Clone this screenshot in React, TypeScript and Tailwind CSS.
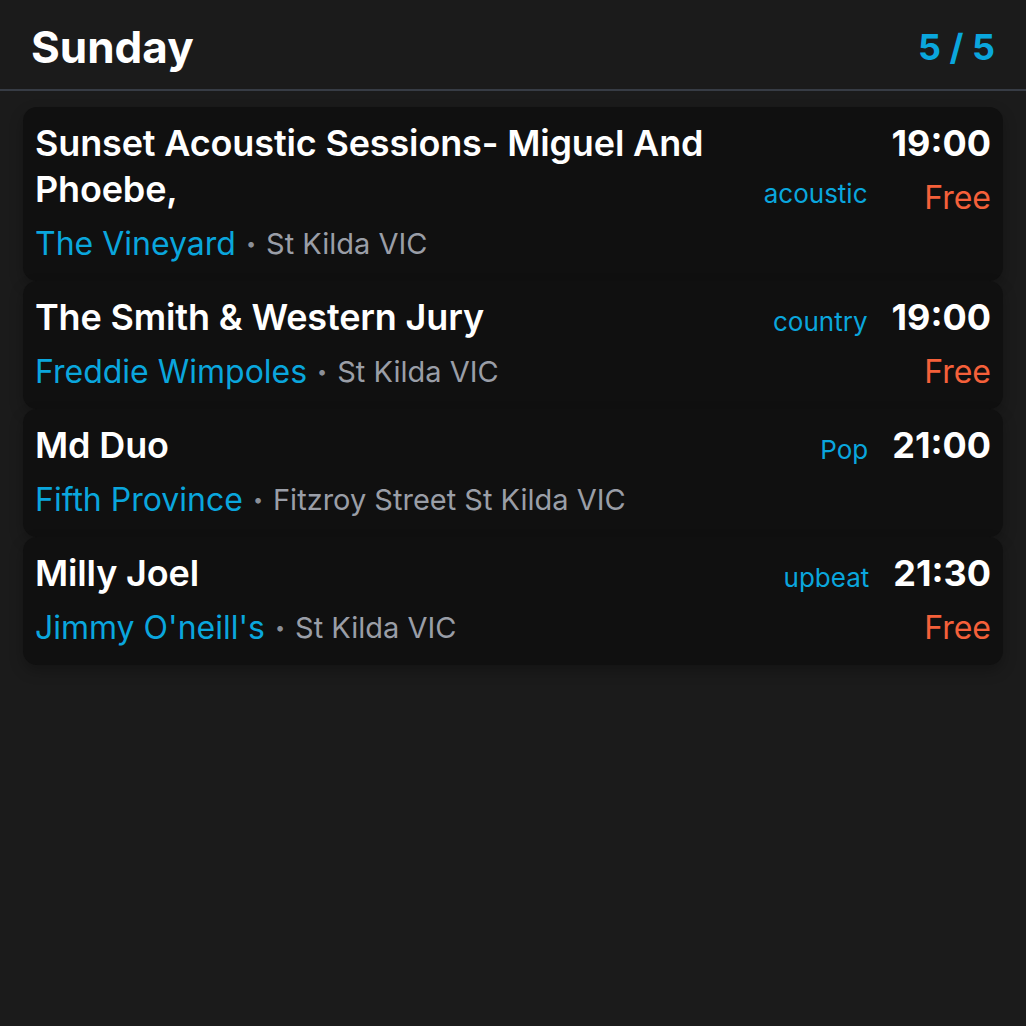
const events = [
  {
    title: "Sunset Acoustic Sessions- Miguel And Phoebe,",
    venue: "The Vineyard",
    location: "St Kilda VIC",
    genre: "acoustic",
    time: "19:00",
    price: "Free",
  },
  {
    title: "The Smith & Western Jury",
    venue: "Freddie Wimpoles",
    location: "St Kilda VIC",
    genre: "country",
    time: "19:00",
    price: "Free",
  },
  {
    title: "Md Duo",
    venue: "Fifth Province",
    location: "Fitzroy Street St Kilda VIC",
    genre: "Pop",
    time: "21:00",
    price: "",
  },
  {
    title: "Milly Joel",
    venue: "Jimmy O'neill's",
    location: "St Kilda VIC",
    genre: "upbeat",
    time: "21:30",
    price: "Free",
  },
]

export default function App() {
  return (
    <div className="min-h-[1026px] w-full bg-[#1b1b1b] font-['Inter',sans-serif] text-white">
      <header className="flex h-[91px] items-center justify-between border-b-2 border-[#373c45] px-[31px] pt-[4px]">
        <h1 className="text-[44px] font-bold">Sunday</h1>
        <span className="text-[36px] font-bold text-[#0aa6dd]">5 / 5</span>
      </header>

      <div className="flex flex-col px-[23px] pt-[16px]">
        {events.map((ev) => (
          <div
            key={ev.title}
            className="flex gap-6 rounded-[14px] bg-[#101010] px-3 pb-[17px] pt-[13px] shadow-[0_6px_14px_rgba(0,0,0,0.25)]"
          >
            <div className="flex min-w-0 flex-1 flex-col gap-[12px]">
              <div className="flex items-end gap-4">
                <h2 className="flex-1 text-[36px] font-semibold leading-[46px] tracking-[-0.15px]">
                  {ev.title}
                </h2>
                <span className="mb-[2px] text-[26px] leading-[32px] text-[#0aa6dd]">
                  {ev.genre}
                </span>
              </div>
              <div className="flex items-center leading-[40px]">
                <span className="text-[32px] text-[#0aa6dd]">{ev.venue}</span>
                <span className="mx-[10px] text-[18px] text-[#8b8f98]">•</span>
                <span className="text-[29px] text-[#9a9ea7]">{ev.location}</span>
              </div>
            </div>
            <div className="flex flex-col items-end gap-[12px]">
              <span className="text-[36px] font-bold leading-[46px]">{ev.time}</span>
              {ev.price && (
                <span className="text-[32px] leading-[40px] text-[#f5603a]">
                  {ev.price}
                </span>
              )}
            </div>
          </div>
        ))}
      </div>
    </div>
  )
}
